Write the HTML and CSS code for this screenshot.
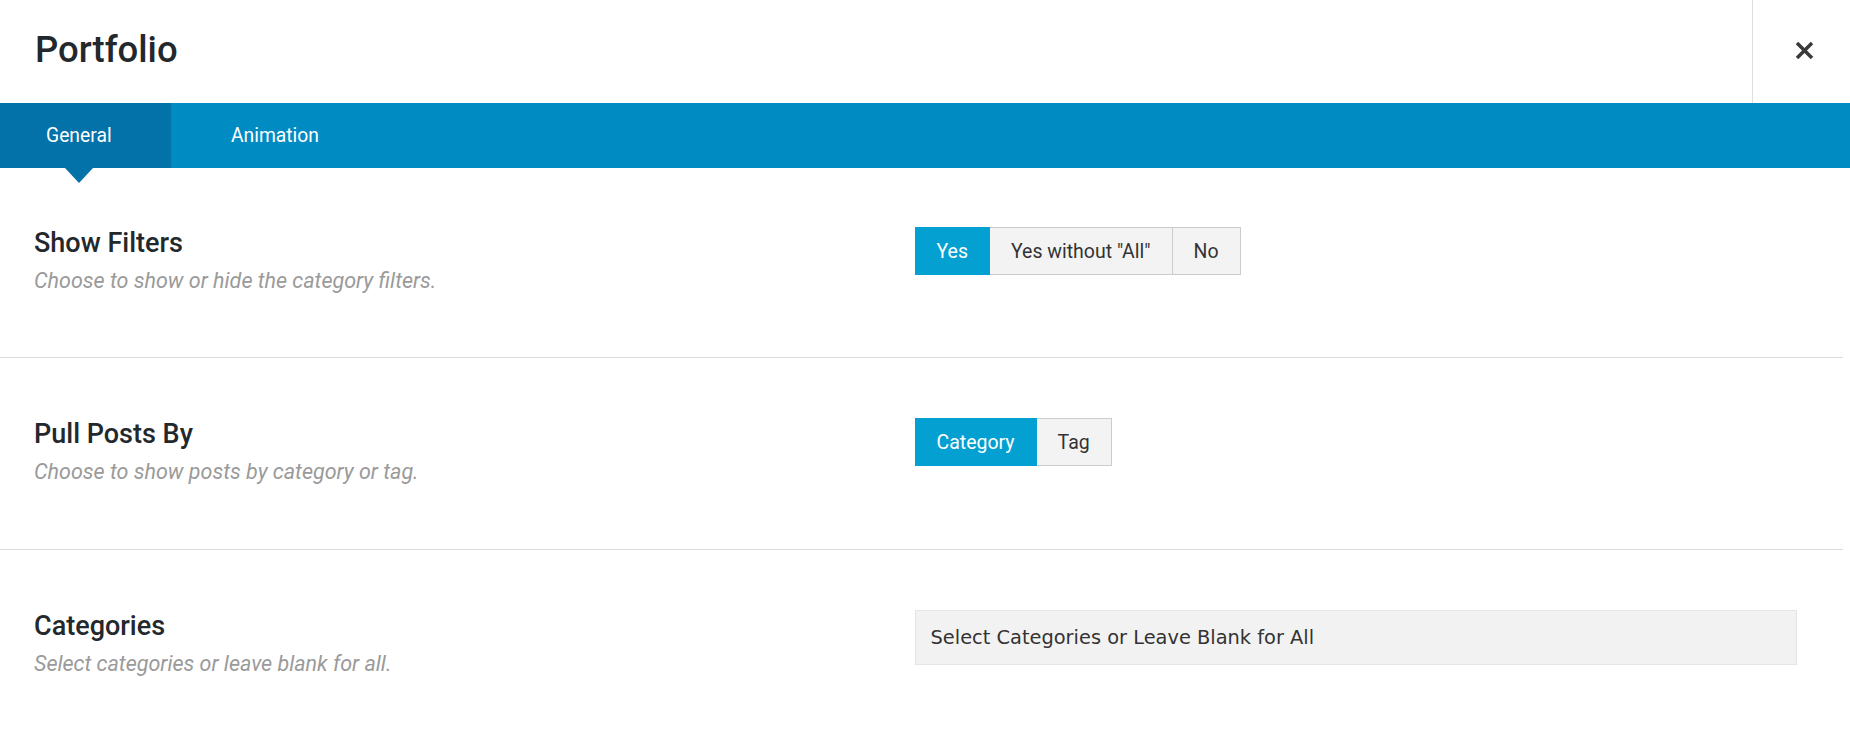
FILE: index.html
```html
<!DOCTYPE html>
<html lang="en">
<head>
<meta charset="utf-8">
<title>Portfolio</title>
<link rel="stylesheet" href="styles.css">
</head>
<body>
<div class="modal">
  <header class="header">
    <h1 class="title">Portfolio</h1>
    <div class="close">
      <svg width="19" height="19" viewBox="0 0 19 19" aria-hidden="true">
        <path d="M2 2 L17 17 M17 2 L2 17" stroke="#3a3a3a" stroke-width="3.5" stroke-linecap="butt" fill="none"/>
      </svg>
    </div>
  </header>
  <nav class="tabs">
    <div class="tab active">General</div>
    <div class="tab">Animation</div>
  </nav>
  <div class="rows">
    <section class="row">
      <div class="info">
        <div class="label">Show Filters</div>
        <div class="desc">Choose to show or hide the category filters.</div>
      </div>
      <div class="field">
        <div class="btn-group">
          <span class="btn on">Yes</span>
          <span class="btn">Yes without "All"</span>
          <span class="btn">No</span>
        </div>
      </div>
    </section>
    <section class="row">
      <div class="info">
        <div class="label">Pull Posts By</div>
        <div class="desc">Choose to show posts by category or tag.</div>
      </div>
      <div class="field">
        <div class="btn-group">
          <span class="btn on">Category</span>
          <span class="btn">Tag</span>
        </div>
      </div>
    </section>
    <section class="row last">
      <div class="info">
        <div class="label">Categories</div>
        <div class="desc">Select categories or leave blank for all.</div>
      </div>
      <div class="field">
        <div class="select">Select Categories or Leave Blank for All</div>
      </div>
    </section>
  </div>
</div>
</body>
</html>
```
FILE: styles.css
```css
* { box-sizing: border-box; }
html, body { margin: 0; padding: 0; background: #fff; }
body {
  font-family: Roboto, "Liberation Sans", Arial, sans-serif;
  color: #23282d;
  width: 1850px;
  height: 733px;
  overflow: hidden;
}
.header {
  height: 103px;
  display: flex;
  align-items: center;
  justify-content: space-between;
}
.title {
  margin: 0 0 4px 35px;
  font-size: 36.5px;
  font-weight: 500;
  line-height: 42px;
  color: #23282d;
}
.close {
  width: 98px;
  height: 103px;
  border-left: 1px solid #dedede;
  display: flex;
  align-items: center;
  justify-content: center;
  padding: 0 0 2px 6px;
}
.tabs {
  height: 65px;
  background: #008bc3;
  display: flex;
}
.tab {
  position: relative;
  display: flex;
  align-items: center;
  padding: 0 60px;
  font-size: 19.3px;
  color: #fff;
}
.tab.active {
  background: #0272a9;
  width: 171px;
  padding: 0 0 0 46px;
}
.tab.active::after {
  content: "";
  position: absolute;
  left: 65px;
  top: 65px;
  border-left: 14px solid transparent;
  border-right: 14px solid transparent;
  border-top: 15px solid #0272a9;
}
.rows {
  width: 1843px;
}
.row {
  display: grid;
  grid-template-columns: 1fr 1fr;
  align-items: start;
  padding: 60px 46px 65px 34px;
  border-bottom: 1px solid #dcdcdc;
}
.row:first-child { padding-top: 59px; padding-bottom: 64px; }
.row.last { border-bottom: none; }
.label {
  font-size: 27px;
  font-weight: 500;
  line-height: 32px;
  color: #23282d;
  margin-bottom: 10px;
}
.desc {
  font-size: 21.5px;
  font-style: italic;
  line-height: 24px;
  color: #9a9a9a;
}
.btn-group {
  display: inline-flex;
  margin-left: -1px;
}
.btn {
  height: 48px;
  display: flex;
  align-items: center;
  padding: 0 21px;
  font-size: 19.5px;
  color: #333;
  background: #f3f3f3;
  border: 1px solid #cccccc;
}
.btn + .btn { border-left: none; }
.btn.on {
  background: #04a0d1;
  border-color: #04a0d1;
  color: #fff;
}
.select {
  height: 55px;
  display: flex;
  align-items: center;
  padding-left: 15px;
  margin-left: -1px;
  background: #f3f2f2;
  border: 1px solid #e6e6e6;
  font-family: "DejaVu Sans", sans-serif;
  font-size: 19.4px;
  color: #333;
}
```
